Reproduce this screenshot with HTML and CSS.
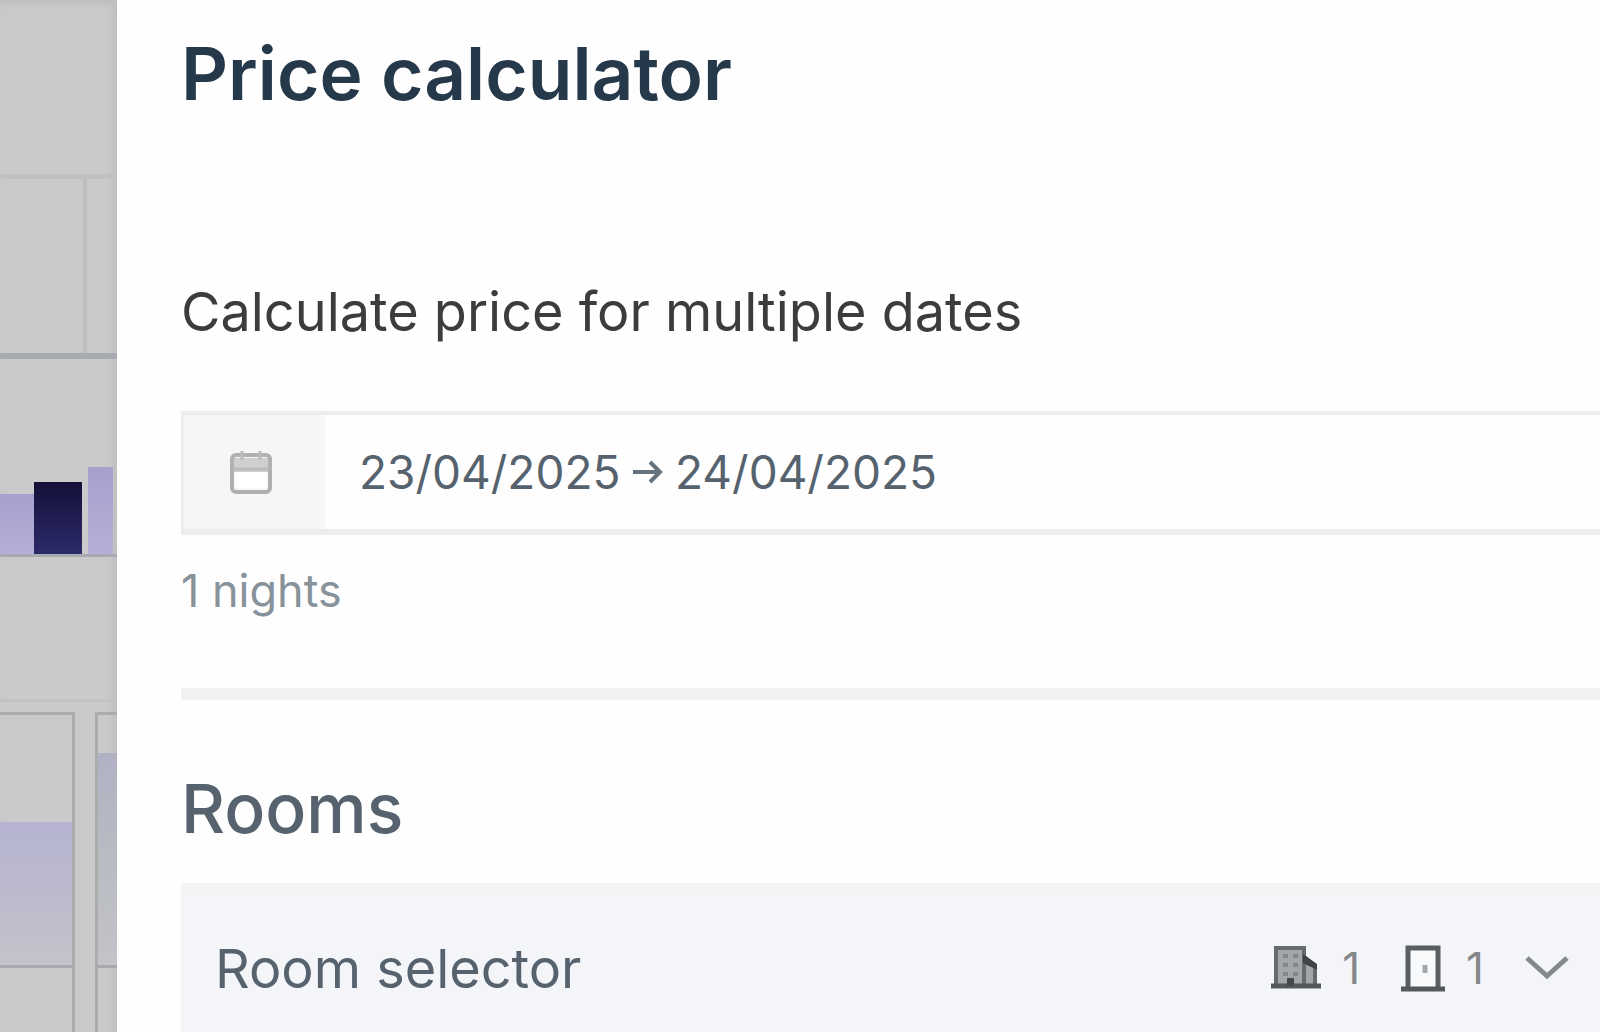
FILE: index.html
```html
<!DOCTYPE html>
<html lang="en">
<head>
<meta charset="utf-8">
<meta name="viewport" content="width=device-width, initial-scale=1">
<title>Price calculator</title>
<link rel="stylesheet" href="styles.css">
</head>
<body>
<div class="app">
  <div class="backdrop" aria-hidden="true">
    <div class="backdrop-header"></div>
    <div class="backdrop-row"><div class="cell"></div></div>
    <div class="chart">
      <span class="bar bar-first"></span>
      <span class="bar bar-selected"></span>
      <span class="bar bar-last"></span>
    </div>
    <div class="backdrop-gap"></div>
    <div class="tiles">
      <div class="tile tile-left"><div class="tile-fill"></div></div>
      <div class="tile tile-right"><div class="tile-fill"></div></div>
    </div>
  </div>
  <main class="panel">
    <h1 class="title">Price calculator</h1>
    <label class="label" for="date-from">Calculate price for multiple dates</label>
    <div class="date-field">
      <span class="date-addon">
        <svg class="icon-calendar" viewBox="0 0 44 46" aria-hidden="true">
          <path d="M4 9h36v14H4z" fill="#cfcfd1"/>
          <rect x="3" y="6" width="38" height="37" rx="4" fill="none" stroke="#b0b0b2" stroke-width="4"/>
          <path d="M4 20h36M13 2v9M31 2v9" fill="none" stroke="#bababc" stroke-width="3"/>
          <path d="M6 23h32v16H6z" fill="#fff"/>
        </svg>
      </span>
      <div class="date-range">
        <input class="date-input" id="date-from" type="text" value="23/04/2025" readonly>
        <svg class="icon-arrow" viewBox="0 0 30 26" aria-hidden="true">
          <path d="M0 13h26M17 3l10 10-10 10" fill="none" stroke="#66727d" stroke-width="4"/>
        </svg>
        <input class="date-input" type="text" aria-label="End date" value="24/04/2025" readonly>
      </div>
    </div>
    <p class="hint">1 nights</p>
    <hr class="divider">
    <h2 class="subtitle">Rooms</h2>
    <section class="card">
      <button class="selector" type="button">
        <span class="selector-name">Room selector</span>
        <span class="count">
          <svg class="icon-building" viewBox="0 0 52 48" aria-hidden="true">
            <path d="M5 3h29v8l12 9v22H5z" fill="#a3a5a8"/>
            <path d="M6 42V4h28v9l11 9v20M34 13v29" fill="none" stroke="#66696d" stroke-width="4"/>
            <path d="M33 10l14 10v6l-14-7z" fill="#3f4246"/>
            <path d="M13 12h5M23 12h5M13 21h5M23 21h5M13 30h5M23 30h5" stroke="#84878a" stroke-width="4"/>
            <path d="M1 42h50" stroke="#54575b" stroke-width="5"/>
            <path d="M17 34h7v8h-7z" fill="#44474b"/>
          </svg>
          <span>1</span>
        </span>
        <span class="count">
          <svg class="icon-door" viewBox="0 0 46 48" aria-hidden="true">
            <path d="M8 44V4h30v40" fill="#f8f9fb" stroke="#5a5d61" stroke-width="5"/>
            <path d="M1 45h44" stroke="#54575b" stroke-width="5"/>
            <path d="M25 21v8" stroke="#a5a8ab" stroke-width="5"/>
          </svg>
          <span>1</span>
        </span>
        <svg class="icon-chevron" viewBox="0 0 46 28" aria-hidden="true">
          <path d="M3 4l20 18L43 4" fill="none" stroke="#85888b" stroke-width="5"/>
        </svg>
      </button>
    </section>
  </main>
</div>
</body>
</html>
```
FILE: styles.css
```css
* {
  box-sizing: border-box;
}

body {
  margin: 0;
  background: #fefefe;
  color: #56636f;
  font-family: Inter, "Liberation Sans", sans-serif;
}

.app {
  display: flex;
  min-height: 100vh;
}

/* Dimmed page behind the panel */
.backdrop {
  display: flex;
  flex: none;
  flex-direction: column;
  width: 117px;
  overflow: hidden;
  background: #cacaca;
  box-shadow: inset -8px 0 8px -4px #bebebe, inset 0 8px 8px -4px #bebebe;
}

.backdrop-header {
  height: 179px;
  border-bottom: 5px solid #c1c1c1;
}

.backdrop-row {
  height: 180px;
  padding-right: 30px;
  border-bottom: 6px solid #a7abb1;
}

.cell {
  height: 100%;
  border-right: 4px solid #bdbdbd;
}

.chart {
  display: flex;
  align-items: flex-end;
  height: 198px;
  border-bottom: 3px solid #a9a9b2;
}

.bar {
  background: linear-gradient(#a89fce, #b5b0d6);
}

.bar-first {
  width: 34px;
  height: 60px;
}

.bar-selected {
  width: 48px;
  height: 72px;
  background: linear-gradient(#14103a, #2c2a68);
}

.bar-last {
  width: 25px;
  height: 87px;
  margin-left: 6px;
}

.backdrop-gap {
  height: 145px;
  margin-bottom: 10px;
  border-bottom: 3px solid #c2c2c2;
}

.tiles {
  display: flex;
  flex: 1;
  gap: 20px;
}

.tile {
  flex: none;
  border: 3px solid #acacac;
  border-bottom: 0;
}

.tile-left {
  width: 75px;
  padding-top: 107px;
  border-left: 0;
}

.tile-right {
  width: 22px;
  padding-top: 38px;
  border-right: 0;
}

.tile-fill {
  height: 146px;
  border-bottom: 3px solid #a9a9ad;
  background: linear-gradient(#b5b3d0, #c3c3cb);
}

.tile-right .tile-fill {
  height: 215px;
  background: linear-gradient(#b1b1c4, #b8bcc2 50%, #c3c3c8);
}

/* Panel */
.panel {
  display: flex;
  flex: 1;
  flex-direction: column;
  min-width: 0;
  padding: 26px 0 0 64px;
}

.title {
  margin: 0;
  color: #26394a;
  font-size: 73px;
  font-weight: 600;
  line-height: 96px;
}

.label {
  margin-top: 156px;
  color: #3c3c3c;
  font-size: 54px;
  line-height: 68px;
}

.date-field {
  display: flex;
  height: 124px;
  margin-top: 65px;
  border: solid #ededed;
  border-width: 4px 0 6px 3px;
}

.date-addon {
  display: flex;
  flex: none;
  align-items: center;
  justify-content: center;
  width: 141px;
  padding-right: 8px;
  background: #f5f6f8;
}

.icon-calendar {
  width: 44px;
  height: 46px;
}

.date-range {
  display: flex;
  flex: 1;
  align-items: center;
  gap: 12px;
  min-width: 0;
  padding-left: 34px;
}

.date-input {
  width: 262px;
  padding: 0;
  border: 0;
  outline: 0;
  background: transparent;
  color: #56636f;
  font-family: inherit;
  font-size: 46px;
}

.icon-arrow {
  flex: none;
  width: 30px;
  height: 26px;
}

.hint {
  margin: 28px 0 0;
  color: #87929a;
  font-size: 45px;
  line-height: 56px;
}

.divider {
  width: 100%;
  height: 12px;
  margin: 69px 0 0;
  border: 0;
  background: #f1f1f1;
}

.subtitle {
  margin: 66px 0 0;
  font-size: 68px;
  font-weight: 500;
  line-height: 84px;
}

.card {
  flex: 1;
  margin-top: 33px;
  border-top: 12px solid #f3f3f3;
  background: #f4f5f8;
}

.selector {
  display: flex;
  align-items: center;
  width: 100%;
  height: 146px;
  padding: 0 30px 0 34px;
  border: 0;
  background: transparent;
  color: inherit;
  font-family: inherit;
  text-align: left;
}

.selector-name {
  flex: 1;
  font-size: 54px;
}

.count {
  display: flex;
  align-items: center;
  gap: 20px;
  margin-right: 40px;
  color: #85888b;
  font-size: 44px;
}

.icon-building {
  width: 52px;
  height: 48px;
}

.icon-door {
  width: 46px;
  height: 48px;
}

.icon-chevron {
  width: 46px;
  height: 28px;
}
```
